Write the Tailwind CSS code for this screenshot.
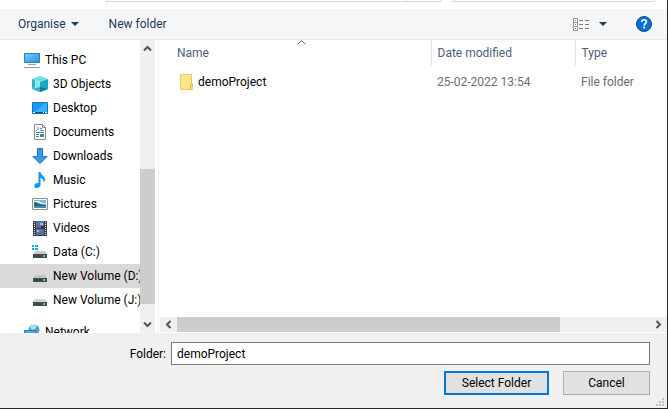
<!DOCTYPE html>
<html lang="en">
<head>
    <meta charset="UTF-8">
    <meta name="viewport" content="width=device-width, initial-scale=1.0">
    <title>Select Folder</title>
    <script src="https://cdn.jsdelivr.net/npm/@tailwindcss/browser@4"></script>
</head>
<body class="h-screen flex flex-col overflow-hidden bg-white border-r border-b border-[#252629] font-[Roboto,'Open_Sans',sans-serif] text-xs text-black">
    <!-- address and search boxes -->
    <div class="flex h-[9px] shrink-0 items-start pl-[106px] pr-3 gap-3">
        <div class="flex flex-1 justify-end h-0.5 border-x border-b border-[#d9d9d9] pr-[33px]">
            <span class="w-px h-full bg-[#d9d9d9]"></span>
        </div>
        <div class="w-[202px] h-0.5 border-x border-b border-[#d9d9d9]"></div>
    </div>

    <!-- toolbar -->
    <header class="flex h-[31px] shrink-0 items-center bg-[#f5f6f7] border-b border-[#e8e8e8] pl-[18px] pr-[15px] text-[#1e395b]">
        <button class="flex items-center gap-[5px]">Organise
            <svg class="w-2 h-1" viewBox="0 0 8 4"><path d="M0 0h8L4 4z" fill="#1e395b"/></svg>
        </button>
        <button class="ml-[30px]">New folder</button>
        <button class="ml-auto flex items-center gap-2.5" aria-label="Change your view">
            <svg class="w-4 h-[13px]" viewBox="0 0 16 13" shape-rendering="crispEdges">
                <path d="M.5.5h4v12h-4zM.5 4.500h4M.5 8.500h4" fill="#fff" stroke="#9a9a9a"/>
                <path d="M2 2h1v1H2zM2 6h1v1H2z" fill="#6f8db5"/>
                <path d="M2 10h1v1H2z" fill="#d33"/>
                <path d="M6 2.500h4M12 2.500h4M6 6.500h4M12 6.500h4M6 10.500h4M12 10.500h4" stroke="#7b7b7b"/>
            </svg>
            <svg class="w-2 h-1" viewBox="0 0 8 4"><path d="M0 0h8L4 4z" fill="#1e395b"/></svg>
        </button>
        <button class="ml-[29px]" aria-label="Help">
            <svg class="w-4 h-4" viewBox="0 0 16 16">
                <circle cx="8" cy="8" r="7.500" fill="#0a6fd0" stroke="#0c4f95"/>
                <path d="M5.800 6c0-3 4.600-2.900 4.600-.2 0 1.700-2.200 1.700-2.200 3.600" fill="none" stroke="#fff" stroke-width="1.700"/>
                <path d="M7.300 10.600h1.800v1.800H7.300z" fill="#fff"/>
            </svg>
        </button>
    </header>

    <main class="flex flex-1 min-h-0">
        <!-- folder tree -->
        <nav class="w-[140px] shrink-0 overflow-hidden pt-2 whitespace-nowrap">
            <a href="#" class="flex h-6 items-center gap-[5px] pl-6">
                <svg class="w-4 h-4 shrink-0" viewBox="0 0 16 16">
                    <defs><linearGradient id="screen" x2="1" y2="1"><stop stop-color="#75cdfb"/><stop offset="1" stop-color="#1c98ee"/></linearGradient></defs>
                    <path d="M.5 1.500h15v9H.5z" fill="url(#screen)" stroke="#397aa7"/>
                    <path d="M4 12.500h8M0 15.500h16" stroke="#8da3b4"/>
                </svg>This PC</a>
            <a href="#" class="flex h-6 items-center gap-[5px] pl-8">
                <svg class="w-4 h-4 shrink-0" viewBox="0 0 16 16">
                    <path d="M0 3l8-3 8 3-8 3z" fill="#6fd9e4"/>
                    <path d="M0 3l8 3v10l-8-3z" fill="#8fe6ee"/>
                    <path d="M16 3L8 6v10l8-3z" fill="#12a9c9"/>
                    <path d="M0 3l3 1v7l-3 2zM0 13l8-2v5z" fill="#2bb3c6"/>
                    <path d="M8 11l8 2-8 3z" fill="#0b7e9b"/>
                </svg>3D Objects</a>
            <a href="#" class="flex h-6 items-center gap-[5px] pl-8">
                <svg class="w-4 h-4 shrink-0" viewBox="0 0 16 16">
                    <path d="M.5 2.500h15v11H.5z" fill="#199bf4" stroke="#1272b8"/>
                    <path d="M3 12L13 3h2v9z" fill="#3db0fb"/>
                    <path d="M1 12h14v1H1z" fill="#075693"/>
                    <path d="M1 12h2v1H1zM11 12h1v1h-1zM13 12h2v1h-2z" fill="#fff"/>
                </svg>Desktop</a>
            <a href="#" class="flex h-6 items-center gap-[5px] pl-8">
                <svg class="w-4 h-4 shrink-0" viewBox="0 0 16 16">
                    <path d="M2.500.5h8l3 3v12h-11z" fill="#fff" stroke="#8b8b8b"/>
                    <path d="M10.500.5v3h3" fill="none" stroke="#8b8b8b"/>
                    <path d="M4 6.500h1M6 3v3M8 4.500h2M8 6.500h4M4 8.500h8M4 10.500h3M4 12.500h3" fill="none" stroke="#398ac0"/>
                    <path d="M8 10h4v3H8z" fill="#51858d"/>
                </svg>Documents</a>
            <a href="#" class="flex h-6 items-center gap-[5px] pl-8">
                <svg class="w-4 h-4 shrink-0" viewBox="0 0 16 16">
                    <path d="M5.500.5h5v8h4.700L8 15.500.8 8.500h4.700z" fill="#3d97e8" stroke="#2474bf"/>
                </svg>Downloads</a>
            <a href="#" class="flex h-6 items-center gap-[5px] pl-8">
                <svg class="w-4 h-4 shrink-0" viewBox="0 0 16 16">
                    <path d="M6.500 0h2c0 3 4.500 4 4.500 7.500 0 1.700-.8 2.500-1.600 3C12 7.500 10 6.300 8.500 5.800V13c0 2-2 3-4 3S2 14.800 2.300 13.500c.4-2 2.700-2.800 4.200-2.300z" fill="#0a98f5"/>
                </svg>Music</a>
            <a href="#" class="flex h-6 items-center gap-[5px] pl-8">
                <svg class="w-4 h-4 shrink-0" viewBox="0 0 16 16">
                    <path d="M.5 2.500h15v11H.5z" fill="#fff" stroke="#909090"/>
                    <path d="M2 4h12v8H2z" fill="#75bce9"/>
                    <path d="M2 5h5l3 2h4v1H2z" fill="#dceefa"/>
                    <path d="M2 6c4 0 6 3 12 3v1H2z" fill="#2d6b62"/>
                    <path d="M2 10h12v2H2z" fill="#4488bd"/>
                </svg>Pictures</a>
            <a href="#" class="flex h-6 items-center gap-[5px] pl-8">
                <svg class="w-4 h-4 shrink-0" viewBox="0 0 16 16" shape-rendering="crispEdges">
                    <path d="M1 1h14v15H1z" fill="#3c3c3c"/>
                    <path d="M2.500 2v13M13.500 2v13" stroke="#e6e6e6" stroke-dasharray="1 1"/>
                    <path d="M4 1h8v7H4zM4 9h8v6H4z" fill="#3f78cc"/>
                    <path d="M5 6h3v2H5zM8 12h3v1H8z" fill="#c23d3c"/>
                    <path d="M8 3h3v2H8zM5 10h2v2H5z" fill="#e5b93b"/>
                    <path d="M9 6h3v2H9z" fill="#243c60"/>
                </svg>Videos</a>
            <a href="#" class="flex h-6 items-center gap-[5px] pl-8">
                <svg class="w-4 h-4 shrink-0" viewBox="0 0 16 16">
                    <path d="M4 7h9l2 3H1z" fill="#c9cacc"/>
                    <path d="M1 10h14v4H1z" fill="#454a4d"/>
                    <path d="M11 11h2v2h-2z" fill="#38e45a"/>
                    <path d="M0 1h2v2H0zM3 1h3v2H3zM0 4h2v2H0zM3 4h3v2H3z" fill="#0bb2ec"/>
                </svg>Data (C:)</a>
            <a href="#" class="flex h-6 items-center gap-[5px] pl-8 bg-[#d9d9d9]" aria-current="true">
                <svg class="w-4 h-4 shrink-0" viewBox="0 0 16 16">
                    <path d="M3 7h10l2 3H1z" fill="#c2c3c5"/>
                    <path d="M1 10h14v4H1z" fill="#454a4d"/>
                    <path d="M11 11h2v2h-2z" fill="#38e45a"/>
                </svg>New Volume (D:)</a>
            <a href="#" class="flex h-6 items-center gap-[5px] pl-8">
                <svg class="w-4 h-4 shrink-0" viewBox="0 0 16 16">
                    <path d="M3 7h10l2 3H1z" fill="#d2d3d5"/>
                    <path d="M1 10h14v4H1z" fill="#454a4d"/>
                    <path d="M11 11h2v2h-2z" fill="#38e45a"/>
                </svg>New Volume (J:)</a>
            <a href="#" class="mt-2 flex h-6 items-center gap-[5px] pl-6">
                <svg class="w-4 h-4 shrink-0" viewBox="0 0 16 16">
                    <circle cx="10" cy="6" r="5.500" fill="#4e9fc9"/>
                    <path d="M6 3c2-3 5-2 7-1l-2 3-3 1z" fill="#b4ddec"/>
                    <path d="M.5 6.500h11v7H.5z" fill="#39aeee" stroke="#2678ab"/>
                </svg>Network</a>
        </nav>
        <div class="w-4 shrink-0 flex flex-col items-center bg-[#f0f0f0] border-r border-r-white">
            <button class="h-[17px] shrink-0" aria-label="Scroll up">
                <svg class="w-[9px] h-[7px]" viewBox="0 0 9 7"><path d="M1 5.500L4.500 2 8 5.500" fill="none" stroke="#555" stroke-width="2"/></svg>
            </button>
            <div class="grow-112"></div>
            <div class="w-full grow-135 bg-[#cdcdcd]"></div>
            <div class="grow-12"></div>
            <button class="h-[17px] shrink-0" aria-label="Scroll down">
                <svg class="w-[9px] h-[7px]" viewBox="0 0 9 7"><path d="M1 1.500L4.500 5 8 1.500" fill="none" stroke="#555" stroke-width="2"/></svg>
            </button>
        </div>

        <!-- folder contents -->
        <section class="ml-0.5 flex flex-1 min-w-0 flex-col border-l border-[#f0f0f0] pl-px">
            <div class="relative flex-1">
                <table class="w-full table-fixed text-left">
                    <thead class="text-[#4c607a]">
                        <tr class="h-[26px]">
                            <th class="border-r border-[#e5e5e5] pl-[17px] font-normal">Name</th>
                            <th class="w-36 border-r border-[#e5e5e5] pl-1.5 font-normal">Date modified</th>
                            <th class="w-[92px] pl-1.5 font-normal">Type</th>
                        </tr>
                    </thead>
                    <tbody class="text-[#6d6d6d]">
                        <tr class="h-8">
                            <td class="pl-5 text-black">
                                <span class="flex items-center gap-1">
                                    <svg class="w-[14px] h-4" viewBox="0 0 14 16">
                                        <path d="M.5.5h11v9h1v6H.5z" fill="#fee58d" stroke="#edc95f"/>
                                        <path d="M10.500 15.500V11l1-1.500" fill="none" stroke="#dfb43e"/>
                                    </svg>demoProject
                                </span>
                            </td>
                            <td class="pl-1.5">25-02-2022 13:54</td>
                            <td class="pl-1.5">File folder</td>
                        </tr>
                    </tbody>
                </table>
                <!-- sort marker over the Name column -->
                <svg class="absolute top-0 left-[137px] w-[9px] h-[5px]" viewBox="0 0 9 5"><path d="M.5 4.500l4-4 4 4" fill="none" stroke="#666"/></svg>
            </div>
            <div class="flex h-[15px] mb-px shrink-0 items-center bg-[#f0f0f0]">
                <button class="flex w-[17px] justify-center" aria-label="Scroll left">
                    <svg class="w-[7px] h-[9px]" viewBox="0 0 7 9"><path d="M5.500 1L2 4.500 5.500 8" fill="none" stroke="#555" stroke-width="2"/></svg>
                </button>
                <div class="h-full grow-383 bg-[#cdcdcd]"></div>
                <div class="grow-90"></div>
                <button class="flex w-[17px] justify-center" aria-label="Scroll right">
                    <svg class="w-[7px] h-[9px]" viewBox="0 0 7 9"><path d="M1.500 1L5 4.500 1.500 8" fill="none" stroke="#555" stroke-width="2"/></svg>
                </button>
            </div>
        </section>
    </main>

    <!-- folder name and actions -->
    <footer class="relative shrink-0 bg-[#f0f0f0] pt-[9px] pb-[13px] pr-[17px]">
        <div class="flex items-center gap-[5px]">
            <label for="folder" class="w-[166px] text-right">Folder:</label>
            <input id="folder" type="text" value="demoProject" class="h-[23px] min-w-0 flex-1 border border-[#7a7a7a] bg-white px-[5px] outline-none">
        </div>
        <div class="mt-1.5 flex justify-end gap-3.5">
            <button class="h-6 w-[105px] border-2 border-[#0078d7] bg-[#e1e1e1]">Select Folder</button>
            <button class="h-6 w-[87px] border border-[#adadad] bg-[#e1e1e1]">Cancel</button>
        </div>
        <svg class="absolute right-[3px] bottom-0.5 w-2 h-2" viewBox="0 0 8 8" shape-rendering="crispEdges"><path d="M6 0h2v2H6zM3 3h2v2H3zM6 3h2v2H6zM0 6h2v2H0zM3 6h2v2H3zM6 6h2v2H6z" fill="#bfbfbf"/></svg>
    </footer>
</body>
</html>
